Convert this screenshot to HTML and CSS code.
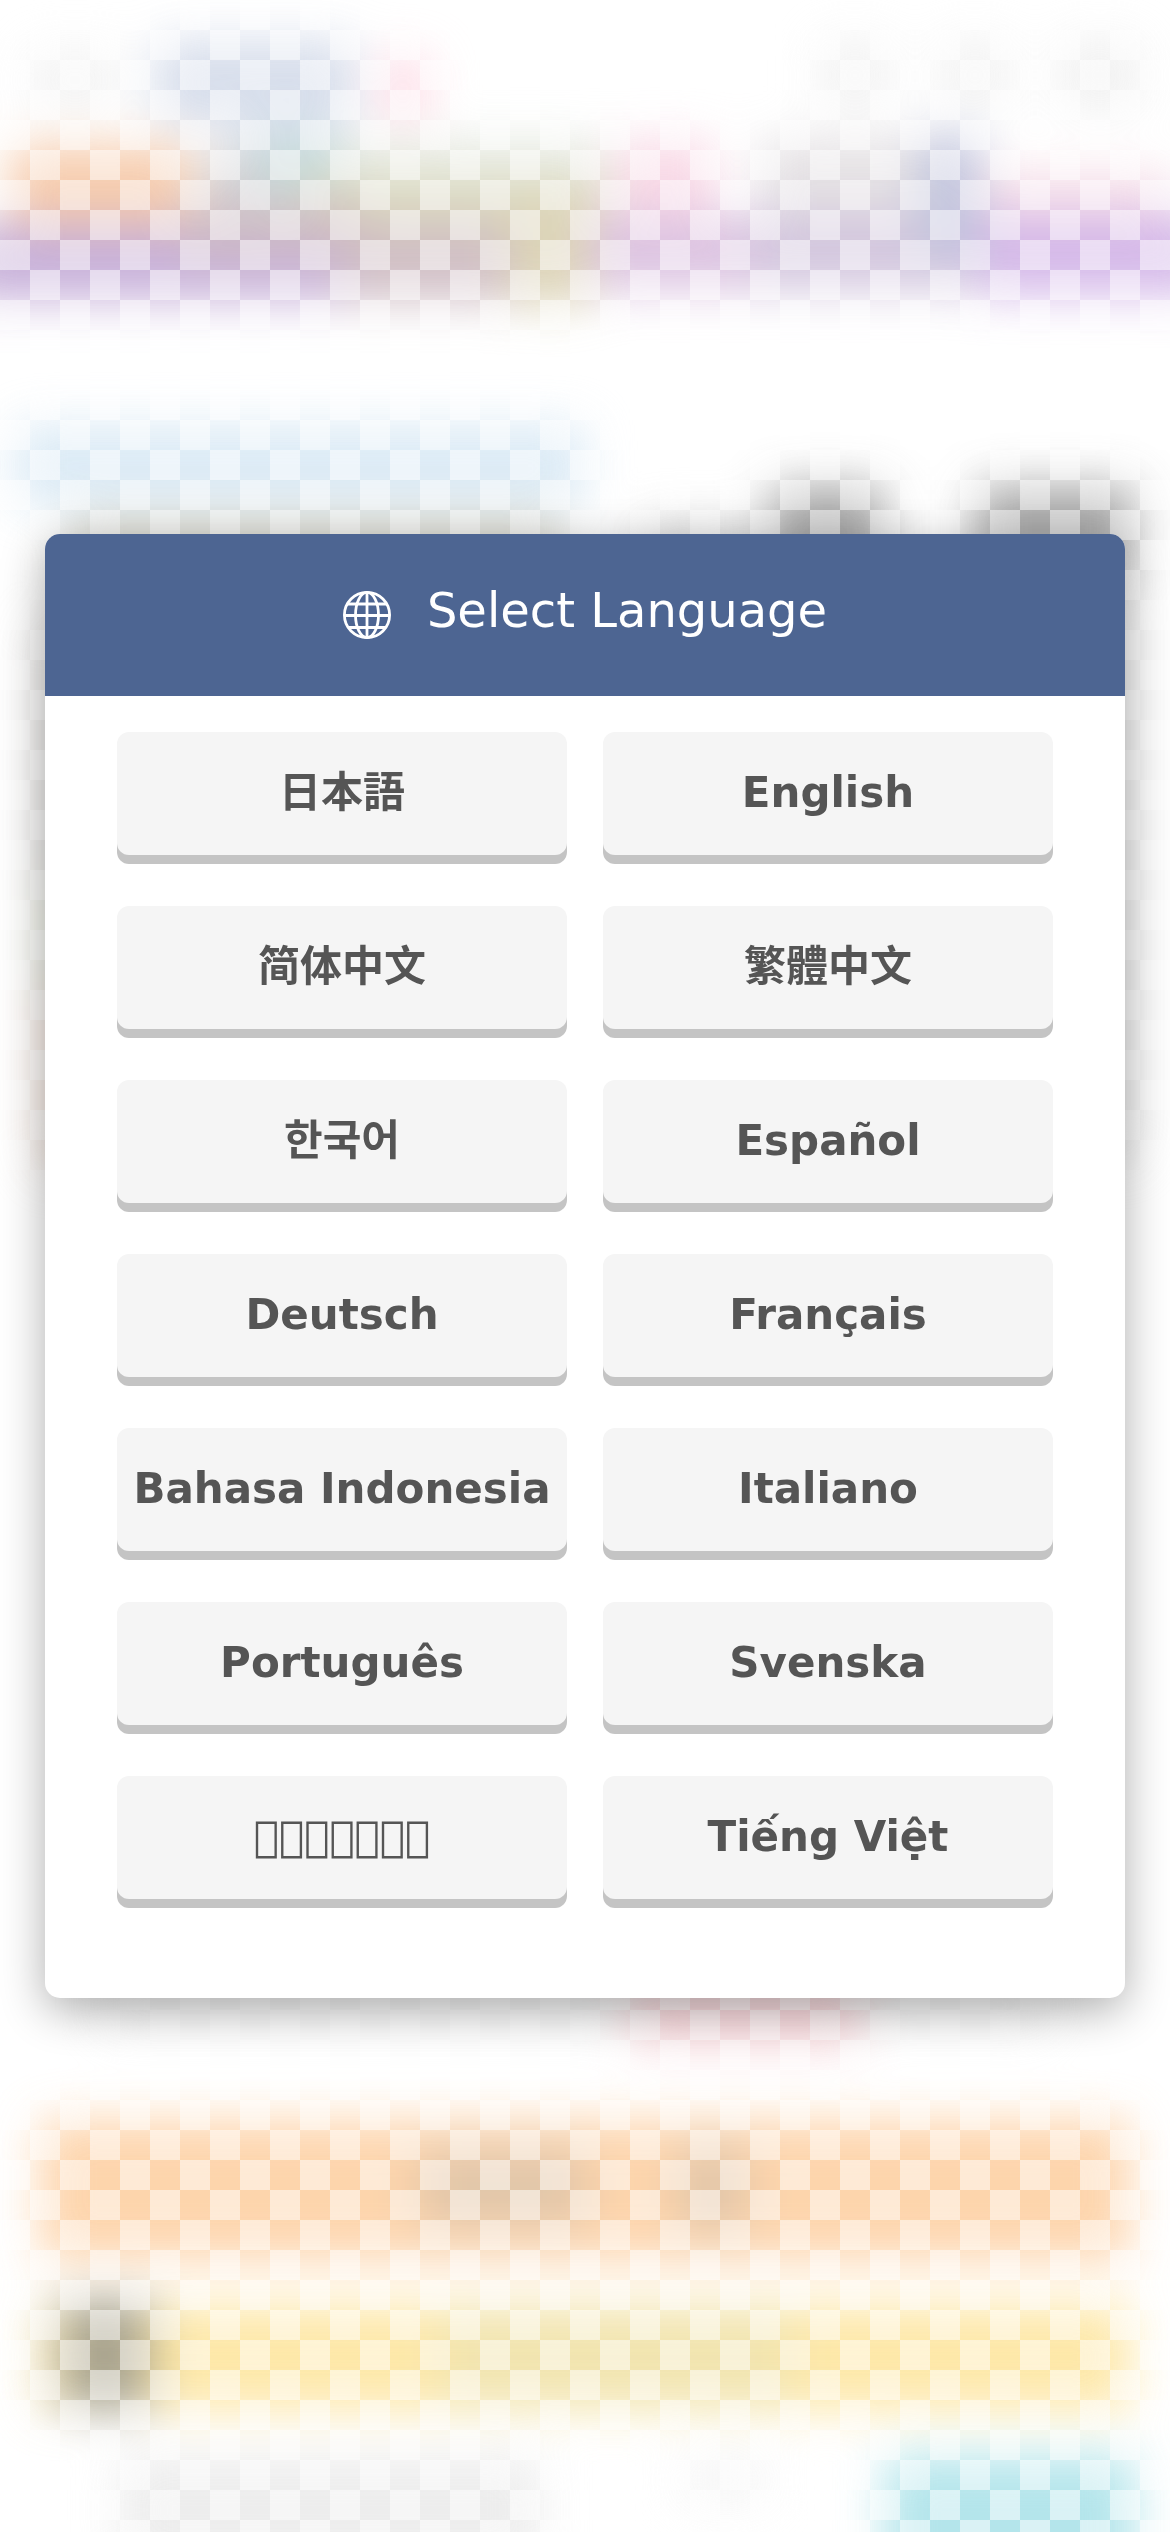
FILE: index.html
```html
<!DOCTYPE html>
<html lang="en">
<head>
<meta charset="utf-8">
<meta name="viewport" content="width=device-width, initial-scale=1">
<title>Select Language</title>
<link rel="stylesheet" href="styles.css">
</head>
<body>
<div class="backdrop" aria-hidden="true">
  <svg class="backdrop-art" viewBox="0 0 1170 2532" preserveAspectRatio="xMidYMid slice">
    <defs>
      <filter id="soft" filterUnits="userSpaceOnUse" x="-100" y="-100" width="1370" height="2732" color-interpolation-filters="sRGB">
        <feGaussianBlur stdDeviation="24"/>
      </filter>
    </defs>
    <g filter="url(#soft)" opacity="0.86">
      <rect x="30" y="50" width="90" height="60" fill="#f1f1f1"/>
      <rect x="155" y="40" width="200" height="85" fill="#d0d8e8"/>
      <rect x="240" y="110" width="90" height="60" fill="#d3ddea"/>
      <rect x="380" y="55" width="50" height="65" fill="#fdd6e2"/>
      <rect x="820" y="40" width="70" height="70" fill="#f0f0f0"/>
      <rect x="940" y="40" width="70" height="70" fill="#f0f0f0"/>
      <rect x="1060" y="40" width="80" height="70" fill="#eee"/>
      <rect x="10" y="145" width="180" height="80" fill="#f5c4a0"/>
      <rect x="205" y="150" width="60" height="90" fill="#c9c8cb"/>
      <rect x="260" y="140" width="80" height="60" fill="#b9d3d3"/>
      <rect x="340" y="140" width="265" height="50" fill="#e2e7de"/>
      <rect x="300" y="180" width="305" height="60" fill="#d6d3b3"/>
      <rect x="615" y="140" width="100" height="90" fill="#f8d3e2"/>
      <rect x="760" y="140" width="160" height="80" fill="#e0dcdf"/>
      <rect x="960" y="170" width="210" height="60" fill="#f6dce5"/>
      <rect x="-40" y="225" width="380" height="75" fill="#bda2d3"/>
      <rect x="180" y="205" width="180" height="50" fill="#c6b0b8"/>
      <rect x="340" y="225" width="170" height="75" fill="#c8b3bb"/>
      <rect x="510" y="190" width="80" height="115" fill="#d8cfac"/>
      <rect x="590" y="215" width="160" height="75" fill="#d6b9dc"/>
      <rect x="750" y="215" width="230" height="75" fill="#cbbcd8"/>
      <rect x="980" y="215" width="230" height="80" fill="#cdace5"/>
      <rect x="920" y="135" width="60" height="120" fill="#b6bbd8"/>
      <rect x="15" y="425" width="570" height="80" fill="#d5e7f4"/>
      <rect x="70" y="515" width="490" height="80" fill="#d6d4c8"/>
      <rect x="640" y="520" width="120" height="80" fill="#d6d6d6"/>
      <rect x="770" y="485" width="115" height="120" fill="#989898"/>
      <rect x="975" y="485" width="160" height="85" fill="#989898"/>
      <rect x="40" y="620" width="40" height="260" fill="#d4d1ce"/>
      <rect x="40" y="880" width="40" height="110" fill="#dcdfce"/>
      <rect x="40" y="990" width="40" height="180" fill="#ead6ca"/>
      <rect x="1100" y="580" width="35" height="580" fill="#dedede"/>
      <rect x="100" y="1985" width="950" height="40" fill="#eee"/>
      <rect x="630" y="1980" width="230" height="65" fill="#f4cbd0"/>
      <rect x="40" y="2120" width="1090" height="140" fill="#fdce9f"/>
      <rect x="420" y="2150" width="165" height="75" fill="#dcbd9d"/>
      <rect x="680" y="2145" width="65" height="85" fill="#dcbd9d"/>
      <rect x="40" y="2305" width="1090" height="105" fill="#fde49a"/>
      <rect x="440" y="2310" width="350" height="95" fill="#efe0a2"/>
      <rect x="60" y="2300" width="90" height="110" fill="#9a947c"/>
      <rect x="120" y="2455" width="420" height="110" fill="#eaeaea"/>
      <rect x="680" y="2455" width="90" height="50" fill="#f4f4f4"/>
      <rect x="885" y="2455" width="250" height="150" fill="#a8e1e8"/>
    </g>
  </svg>
</div>
<main class="page">
  <section class="dialog" role="dialog" aria-labelledby="dialog-title">
    <header class="dialog-header">
      <svg class="globe" viewBox="0 0 48 48" fill="none" stroke="#fff" stroke-width="2.8" aria-hidden="true">
        <circle cx="24" cy="24" r="22.6"/>
        <ellipse cx="24" cy="24" rx="11.5" ry="22.6"/>
        <path d="M24 1v46M1 24.500h46M5 13h38M5 36.500h38"/>
      </svg>
      <h1 class="dialog-title" id="dialog-title">Select Language</h1>
    </header>
    <div class="languages">
      <button class="language language-cjk" type="button" lang="ja">日本語</button>
      <button class="language" type="button" lang="en">English</button>
      <button class="language language-cjk" type="button" lang="zh-Hans">简体中文</button>
      <button class="language language-cjk" type="button" lang="zh-Hant">繁體中文</button>
      <button class="language language-cjk" type="button" lang="ko">한국어</button>
      <button class="language" type="button" lang="es">Español</button>
      <button class="language" type="button" lang="de">Deutsch</button>
      <button class="language" type="button" lang="fr">Français</button>
      <button class="language" type="button" lang="id">Bahasa Indonesia</button>
      <button class="language" type="button" lang="it">Italiano</button>
      <button class="language" type="button" lang="pt">Português</button>
      <button class="language" type="button" lang="sv">Svenska</button>
      <button class="language" type="button" lang="th" aria-label="Thai">&#xF0000;&#xF0000;&#xF0000;&#xF0000;&#xF0000;&#xF0000;&#xF0000;</button>
      <button class="language" type="button" lang="vi">Tiếng Việt</button>
    </div>
  </section>
</main>
</body>
</html>
```
FILE: styles.css
```css
* {
  box-sizing: border-box;
}

body {
  margin: 0;
  background: #fff;
  font-family: "DejaVu Sans", "Noto Sans CJK JP", sans-serif;
}

.backdrop {
  position: fixed;
  inset: 0;
  z-index: -1;
  overflow: hidden;
}

.backdrop-art {
  display: block;
  width: 100%;
  height: 100%;
}

/* Checkerboard veil over the blurred colours */
.backdrop::after {
  content: "";
  position: absolute;
  inset: 0;
  background: repeating-conic-gradient(transparent 0 25%, rgba(255, 255, 255, 0.5) 0 50%) 0 0 / 60px 60px;
}

.page {
  display: flex;
  align-items: center;
  justify-content: center;
  min-height: 100vh;
  padding: 45px;
}

.dialog {
  flex: 1;
  overflow: hidden;
  border-radius: 15px;
  background: #fff;
  box-shadow: 0 12px 45px rgba(0, 0, 0, 0.32);
}

.dialog-header {
  display: flex;
  align-items: center;
  justify-content: center;
  gap: 36px;
  height: 162px;
  background: #4d6592;
  color: #fff;
}

.globe {
  width: 48px;
  height: 48px;
}

.dialog-title {
  margin: 0;
  padding-bottom: 9px;
  font-size: 48px;
  font-weight: 400;
  line-height: 57px;
}

.languages {
  display: grid;
  grid-template-columns: 1fr 1fr;
  column-gap: 36px;
  row-gap: 51px;
  padding: 36px 72px 99px;
}

.language {
  height: 123px;
  padding: 0 0 2px;
  border: 0;
  border-radius: 12px;
  background: #f5f5f5;
  box-shadow: 0 9px 0 #c4c4c4;
  color: #555;
  font-family: inherit;
  font-size: 42px;
  font-weight: 700;
  white-space: nowrap;
  cursor: pointer;
}

.language-cjk {
  padding-bottom: 10px;
}

.language:lang(zh-Hans) {
  font-family: "DejaVu Sans", "Noto Sans CJK SC", sans-serif;
}

.language:lang(zh-Hant) {
  font-family: "DejaVu Sans", "Noto Sans CJK TC", sans-serif;
}

.language:lang(ko) {
  font-family: "DejaVu Sans", "Noto Sans CJK KR", sans-serif;
}
```
